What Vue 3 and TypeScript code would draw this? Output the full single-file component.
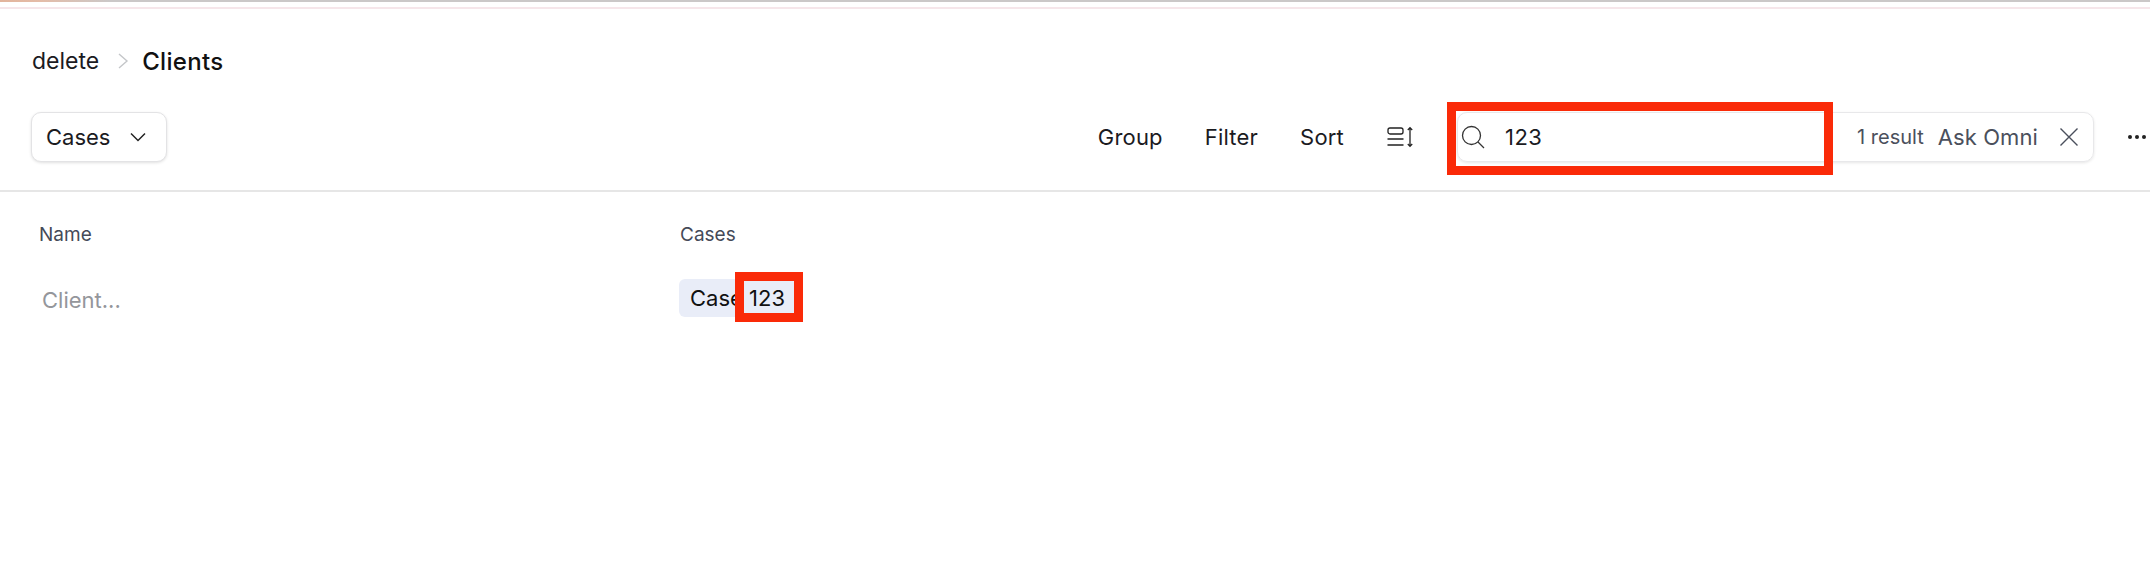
<template>
  <div class="page">
    <div class="top-strip"></div>
    <div class="top-line"></div>

    <nav class="breadcrumb">
      <span class="crumb">delete</span>
      <svg class="crumb-sep" width="12" height="18" viewBox="0 0 12 18" fill="none">
        <path d="M2 2l8 7-8 7" stroke="#c4c6c9" stroke-width="1.4" />
      </svg>
      <span class="crumb current">Clients</span>
    </nav>

    <div class="toolbar">
      <button class="view-select">
        <span>Cases</span>
        <svg width="18" height="10" viewBox="0 0 18 10" fill="none">
          <path d="M2 1.5l7 7 7-7" stroke="#222" stroke-width="1.5" />
        </svg>
      </button>

      <div class="actions">
        <span class="action">Group</span>
        <span class="action">Filter</span>
        <span class="action">Sort</span>
        <svg class="density" width="28" height="24" viewBox="0 0 28 24" fill="none" stroke="#222" stroke-width="1.3">
          <rect x="2" y="3" width="15" height="6" rx="2" />
          <path d="M1.5 14h16M1.5 20h16" />
          <path d="M24 3v18M21.8 5l2.2-2.4 2.2 2.4M21.8 19l2.2 2.4 2.2-2.4" />
        </svg>
      </div>

      <div class="search">
        <svg width="24" height="24" viewBox="0 0 24 24" fill="none" stroke="#333" stroke-width="1.3">
          <circle cx="10.500" cy="10.500" r="9" />
          <path d="M17 17l6 6" />
        </svg>
        <span class="search-value">123</span>
        <span class="result-count">1 result</span>
        <span class="ask">Ask Omni</span>
        <svg class="close" width="20" height="20" viewBox="0 0 20 20" fill="none" stroke="#4a4f5c" stroke-width="1.4">
          <path d="M1.500 1.500l17 17M18.500 1.500l-17 17" />
        </svg>
        <div class="mark mark-search"></div>
      </div>

      <div class="more"><i></i><i></i><i></i></div>
    </div>

    <div class="table">
      <div class="row head">
        <div class="col-name">Name</div>
        <div class="col-cases">Cases</div>
      </div>
      <div class="row body">
        <div class="col-name placeholder">Client...</div>
        <div class="col-cases">
          <span class="chip">
            Case 123
            <span class="mark mark-chip"></span>
          </span>
        </div>
      </div>
    </div>
  </div>
</template>

<script setup lang="ts">
</script>

<style>
html, body { background: #fff; }
</style>

<style scoped>
.page {
  width: 2150px;
  height: 582px;
  overflow: hidden;
  background: #fff;
  color: #1b1b1f;
  font-family: Inter, "Liberation Sans", sans-serif;
}

.top-strip {
  height: 2px;
  background: linear-gradient(90deg, #e2b49c 0, #e4bca8 40px, #cbc8c8 110px, #cbc8c8 100%);
}

.top-line {
  height: 2px;
  margin-top: 5px;
  background: #f6e6ea;
}

.breadcrumb {
  display: flex;
  align-items: center;
  height: 24px;
  margin-top: 40px;
  padding-left: 32px;
  font-size: 23px;
}

.crumb-sep { margin: 0 13px 0 18px; }
.current { font-size: 24px; font-weight: 500; letter-spacing: 0.3px; color: #111; }

.toolbar {
  display: flex;
  align-items: center;
  height: 50px;
  margin-top: 39px;
  padding: 0 4px 0 31px;
  font-size: 22px;
}

.view-select {
  display: flex;
  align-items: center;
  gap: 19px;
  width: 136px;
  height: 50px;
  padding: 0 0 0 14px;
  background: #fff;
  border: 1px solid #e3e3e5;
  border-radius: 10px;
  box-shadow: 0 1px 3px rgba(0, 0, 0, 0.12);
  font: inherit;
  color: inherit;
}

.actions {
  display: flex;
  align-items: center;
  gap: 42px;
  margin-left: auto;
  letter-spacing: 0.2px;
}

.density { margin-right: 43px; }

.search {
  position: relative;
  display: flex;
  align-items: center;
  width: 637px;
  height: 50px;
  padding-left: 3px;
  border: 1px solid #e8e8ea;
  border-radius: 10px;
  box-shadow: 0 1px 3px rgba(0, 0, 0, 0.1);
  box-sizing: border-box;
}

.search-value { margin-left: 20px; letter-spacing: 0.5px; }

.result-count {
  margin-left: auto;
  font-size: 20px;
  color: #4b505c;
}

.ask {
  margin-left: 14px;
  letter-spacing: 0.1px;
  color: #4b505c;
}

.close { margin: 0 14px 0 21px; }

.mark {
  position: absolute;
  box-sizing: border-box;
  border: 9px solid #fa2a08;
}

.mark-search {
  left: -11px;
  top: -11px;
  width: 386px;
  height: 73px;
}

.more {
  display: flex;
  gap: 3px;
  margin-left: 34px;
}

.more i {
  width: 4px;
  height: 4px;
  border-radius: 50%;
  background: #222;
}

.table {
  margin-top: 28px;
  border-top: 2px solid #e6e6e6;
}

.row {
  display: flex;
  align-items: center;
}

.head {
  height: 84px;
  padding-left: 39px;
  font-size: 19px;
  color: #454a58;
}

.body {
  padding: 3px 0 0 42px;
  font-size: 22px;
}

.head .col-name { width: 641px; }
.body .col-name { width: 637px; margin-top: 4px; }

.placeholder { color: #94969b; }

.chip {
  position: relative;
  display: inline-block;
  width: 116px;
  height: 38px;
  padding-left: 11px;
  line-height: 38px;
  box-sizing: border-box;
  white-space: nowrap;
  background: #e9edf8;
  border-radius: 6px;
  color: #111;
}

.mark-chip {
  left: 56px;
  top: -7px;
  width: 68px;
  height: 50px;
}
</style>
